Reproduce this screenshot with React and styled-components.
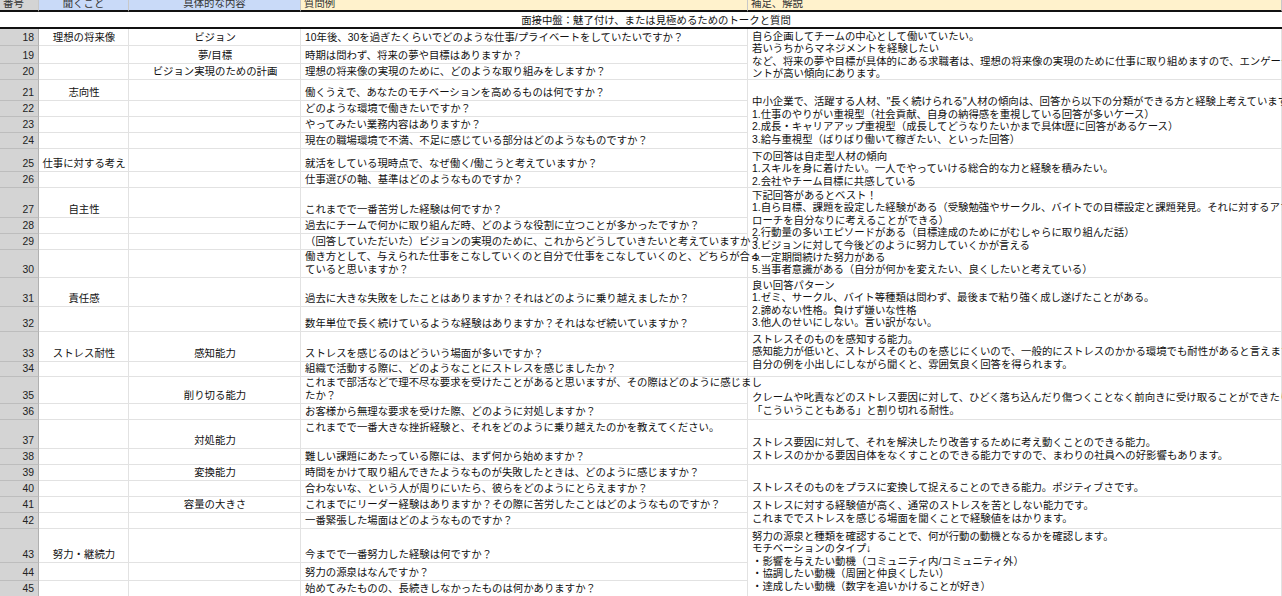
import React from "react";
import styled, { createGlobalStyle } from "styled-components";

const Global = createGlobalStyle`
  html, body { margin: 0; padding: 0; background: #fff; overflow: hidden; }
  body { font-family: "Liberation Sans", "Noto Sans CJK JP", sans-serif; font-size: 10.4px; color: #111; }
`;

const rows = [
  { n: 18, h: 17, b: "理想の将来像", c: "ビジョン", d: ["10年後、30を過ぎたくらいでどのような仕事/プライベートをしていたいですか？"] },
  { n: 19, h: 18, c: "夢/目標", d: ["時期は問わず、将来の夢や目標はありますか？"] },
  { n: 20, h: 16, c: "ビジョン実現のための計画", d: ["理想の将来像の実現のために、どのような取り組みをしますか？"] },
  { n: 21, h: 21, b: "志向性", d: ["働くうえで、あなたのモチベーションを高めるものは何ですか？"] },
  { n: 22, h: 16, d: ["どのような環境で働きたいですか？"] },
  { n: 23, h: 16, d: ["やってみたい業務内容はありますか？"] },
  { n: 24, h: 16, d: ["現在の職場環境で不満、不足に感じている部分はどのようなものですか？"] },
  { n: 25, h: 23, b: "仕事に対する考え", d: ["就活をしている現時点で、なぜ働く/働こうと考えていますか？"] },
  { n: 26, h: 16, d: ["仕事選びの軸、基準はどのようなものですか？"] },
  { n: 27, h: 30, b: "自主性", d: ["これまでで一番苦労した経験は何ですか？"] },
  { n: 28, h: 16, d: ["過去にチームで何かに取り組んだ時、どのような役割に立つことが多かったですか？"] },
  { n: 29, h: 16, d: ["（回答していただいた）ビジョンの実現のために、これからどうしていきたいと考えていますか？"] },
  { n: 30, h: 28, d: ["働き方として、与えられた仕事をこなしていくのと自分で仕事をこなしていくのと、どちらが合っ", "ていると思いますか？"] },
  { n: 31, h: 29, b: "責任感", d: ["過去に大きな失敗をしたことはありますか？それはどのように乗り越えましたか？"] },
  { n: 32, h: 25, d: ["数年単位で長く続けているような経験はありますか？それはなぜ続いていますか？"] },
  { n: 33, h: 30, b: "ストレス耐性", c: "感知能力", d: ["ストレスを感じるのはどういう場面が多いですか？"] },
  { n: 34, h: 15, d: ["組織で活動する際に、どのようなことにストレスを感じましたか？"] },
  { n: 35, h: 27, c: "削り切る能力", d: ["これまで部活などで理不尽な要求を受けたことがあると思いますが、その際はどのように感じまし", "たか？"] },
  { n: 36, h: 16, d: ["お客様から無理な要求を受けた際、どのように対処しますか？"] },
  { n: 37, h: 29, c: "対処能力", d: ["これまでで一番大きな挫折経験と、それをどのように乗り越えたのかを教えてください。"], top: true },
  { n: 38, h: 16, d: ["難しい課題にあたっている際には、まず何から始めますか？"] },
  { n: 39, h: 16, c: "変換能力", d: ["時間をかけて取り組んできたようなものが失敗したときは、どのように感じますか？"] },
  { n: 40, h: 16, d: ["合わないな、という人が周りにいたら、彼らをどのようにとらえますか？"] },
  { n: 41, h: 16, c: "容量の大きさ", d: ["これまでにリーダー経験はありますか？その際に苦労したことはどのようなものですか？"] },
  { n: 42, h: 16, d: ["一番緊張した場面はどのようなものですか？"] },
  { n: 43, h: 34, b: "努力・継続力", d: ["今までで一番努力した経験は何ですか？"] },
  { n: 44, h: 18, d: ["努力の源泉はなんですか？"] },
  { n: 45, h: 16, d: ["始めてみたものの、長続きしなかったものは何かありますか？"] },
];

const notes = [
  { start: 0, span: 3, al: "start", lines: ["自ら企画してチームの中心として働いていたい。", "若いうちからマネジメントを経験したい", "など、将来の夢や目標が具体的にある求職者は、理想の将来像の実現のために仕事に取り組めますので、エンゲージメ", "ントが高い傾向にあります。"] },
  { start: 3, span: 4, al: "end", lines: ["中小企業で、活躍する人材、\"長く続けられる\"人材の傾向は、回答から以下の分類ができる方と経験上考えています。", "1.仕事のやりがい重視型（社会貢献、自身の納得感を重視している回答が多いケース）", "2.成長・キャリアアップ重視型（成長してどうなりたいかまで具体t歴に回答があるケース）", "3.給与重視型（ばりばり働いて稼ぎたい、といった回答）"] },
  { start: 7, span: 2, al: "start", lines: ["下の回答は自走型人材の傾向", "1.スキルを身に着けたい。一人でやっていける総合的な力と経験を積みたい。", "2.会社やチーム目標に共感している"] },
  { start: 9, span: 4, al: "start", lines: ["下記回答があるとベスト！", "1.自ら目標、課題を設定した経験がある（受験勉強やサークル、バイトでの目標設定と課題発見。それに対するアプ", "ローチを自分なりに考えることができる）", "2.行動量の多いエピソードがある（目標達成のためにがむしゃらに取り組んだ話）", "3.ビジョンに対して今後どのように努力していくかが言える", "4.一定期間続けた努力がある", "5.当事者意識がある（自分が何かを変えたい、良くしたいと考えている）"] },
  { start: 13, span: 2, al: "start", lines: ["良い回答パターン", "1.ゼミ、サークル、バイト等種類は問わず、最後まで粘り強く成し遂げたことがある。", "2.諦めない性格。負けず嫌いな性格", "3.他人のせいにしない。言い訳がない。"] },
  { start: 15, span: 2, al: "start", lines: ["ストレスそのものを感知する能力。", "感知能力が低いと、ストレスそのものを感じにくいので、一般的にストレスのかかる環境でも耐性があると言えます。", "自分の例を小出しにしながら聞くと、雰囲気良く回答を得られます。"] },
  { start: 17, span: 2, al: "end", lines: ["クレームや叱責などのストレス要因に対して、ひどく落ち込んだり傷つくことなく前向きに受け取ることができたり、", "「こういうこともある」と割り切れる耐性。"] },
  { start: 19, span: 2, al: "end", lines: ["ストレス要因に対して、それを解決したり改善するために考え動くことのできる能力。", "ストレスのかかる要因自体をなくすことのできる能力ですので、まわりの社員への好影響もあります。"] },
  { start: 21, span: 2, al: "end", lines: ["ストレスそのものをプラスに変換して捉えることのできる能力。ポジティブさです。"] },
  { start: 23, span: 2, al: "center", lines: ["ストレスに対する経験値が高く、通常のストレスを苦としない能力です。", "これまででストレスを感じる場面を聞くことで経験値をはかります。"] },
  { start: 25, span: 3, al: "start", lines: ["努力の源泉と種類を確認することで、何が行動の動機となるかを確認します。", "モチベーションのタイプ↓", "・影響を与えたい動機（コミュニティ内/コミュニティ外）", "・協調したい動機（周囲と仲良くしたい）", "・達成したい動機（数字を追いかけることが好き）"] },
];

const Sheet = styled.div`
  display: grid;
  grid-template-columns: 39px 90px 172px 447px 1fr;
  grid-template-rows: 12px 17px ${rows.map((r) => r.h + "px").join(" ")};
  width: 1282px;
  height: 596px;
  overflow: hidden;
`;

const Head = styled.div`
  grid-row: 1;
  background: ${(p) => p.$bg};
  border-bottom: 2px solid #111;
  border-right: 1px solid #c8c8c8;
  overflow: hidden;
  display: flex;
  align-items: flex-end;
  justify-content: ${(p) => (p.$center ? "center" : "flex-start")};
  padding: 0 3px;
  line-height: 12px;
  box-sizing: border-box;
  color: #333;
`;

const SubHead = styled.div`
  grid-row: 2;
  grid-column: 1 / 6;
  border-bottom: 2px solid #111;
  display: flex;
  align-items: center;
  justify-content: center;
  box-sizing: border-box;
  padding-left: 30px;
`;

const Cell = styled.div`
  grid-row: ${(p) => p.$row} / span ${(p) => p.$span || 1};
  grid-column: ${(p) => p.$col};
  border-bottom: 1px solid #e2e2e2;
  border-right: 1px solid #e2e2e2;
  box-sizing: border-box;
  display: flex;
  flex-direction: column;
  justify-content: ${(p) => (p.$al === "start" ? "flex-start" : p.$al === "center" ? "center" : "flex-end")};
  align-items: ${(p) => (p.$center ? "center" : "flex-start")};
  padding: 1px 3px 1px 4px;
  line-height: 13px;
  white-space: nowrap;
  overflow: visible;
  min-width: 0;
`;

const NumCell = styled(Cell)`
  background: #d4d4d4;
  border-bottom: 1px solid #bdbdbd;
  border-right: 1px solid #b0b0b0;
  align-items: flex-end;
  padding-right: 4px;
  color: #222;
`;

const NoteCell = styled(Cell)`
  padding-top: 2px;
  padding-bottom: 2px;
  line-height: 12.4px;
`;

export default function App() {
  return (
    <>
      <Global />
      <Sheet>
        <Head $bg="#d4d4d4">番号</Head>
        <Head $bg="#c9daf8" $center>聞くこと</Head>
        <Head $bg="#c9daf8" $center>具体的な内容</Head>
        <Head $bg="#fff2cc">質問例</Head>
        <Head $bg="#fff2cc">補足、解説</Head>
        <SubHead>面接中盤：魅了付け、または見極めるためのトークと質問</SubHead>
        {rows.map((r, i) => {
          const row = i + 3;
          return (
            <React.Fragment key={r.n}>
              <NumCell $row={row} $col={1}>{r.n}</NumCell>
              <Cell $row={row} $col={2} $center>{r.b || ""}</Cell>
              <Cell $row={row} $col={3} $center>{r.c || ""}</Cell>
              <Cell $row={row} $col={4} $al={r.top ? "start" : "end"}>
                {r.d.map((t, k) => (
                  <span key={k}>{t}</span>
                ))}
              </Cell>
            </React.Fragment>
          );
        })}
        {notes.map((nb) => (
          <NoteCell key={nb.start} $row={nb.start + 3} $span={nb.span} $col={5} $al={nb.al}>
            {nb.lines.map((t, k) => (
              <span key={k}>{t}</span>
            ))}
          </NoteCell>
        ))}
      </Sheet>
    </>
  );
}
